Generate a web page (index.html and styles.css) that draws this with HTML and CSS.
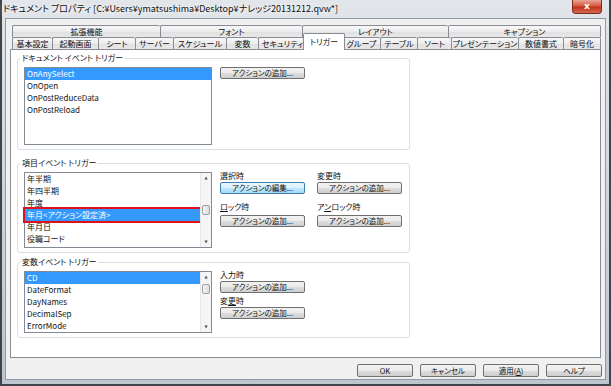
FILE: index.html
```html
<!DOCTYPE html>
<html lang="ja">
<head>
  <meta charset="UTF-8">
  <title>ドキュメント プロパティ</title>
  <link rel="stylesheet" href="styles.css">
</head>
<body>
  <div class="window">
    <div class="titlebar">
      <span class="title">ドキュメント プロパティ [C:¥Users¥ymatsushima¥Desktop¥ナレッジ20131212.qvw*]</span>
      <span class="close">x</span>
    </div>

    <div class="client">
      <div class="tabs">
        <div class="tab-row back">
          <div class="tab">拡張機能</div>
          <div class="tab">フォント</div>
          <div class="tab">レイアウト</div>
          <div class="tab">キャプション</div>
        </div>
        <div class="tab-row front">
          <div class="tab">基本設定</div>
          <div class="tab">起動画面</div>
          <div class="tab">シート</div>
          <div class="tab">サーバー</div>
          <div class="tab">スケジュール</div>
          <div class="tab">変数</div>
          <div class="tab">セキュリティ</div>
          <div class="tab active">トリガー</div>
          <div class="tab">グループ</div>
          <div class="tab">テーブル</div>
          <div class="tab">ソート</div>
          <div class="tab">プレゼンテーション</div>
          <div class="tab">数値書式</div>
          <div class="tab">暗号化</div>
        </div>
      </div>

      <div class="panel">
        <!-- ドキュメント イベント -->
        <fieldset class="group group-doc">
          <legend>ドキュメント イベント トリガー</legend>
          <div class="group-body">
            <div class="listbox list-doc">
              <div class="items">
                <div class="item selected">OnAnySelect</div>
                <div class="item">OnOpen</div>
                <div class="item">OnPostReduceData</div>
                <div class="item">OnPostReload</div>
              </div>
            </div>
            <div class="actions single">
              <button class="btn">アクションの追加...</button>
            </div>
          </div>
        </fieldset>

        <!-- 項目イベント -->
        <fieldset class="group group-field">
          <legend>項目イベント トリガー</legend>
          <div class="group-body">
            <div class="listbox list-field">
              <div class="items">
                <div class="item">年半期</div>
                <div class="item">年四半期</div>
                <div class="item">年度</div>
                <div class="item selected marked">年月&lt;アクション設定済&gt;</div>
                <div class="item">年月日</div>
                <div class="item">役職コード</div>
                <div class="item cut">所属コード</div>
              </div>
              <div class="scrollbar">
                <div class="arrow">▲</div>
                <div class="track"><div class="thumb thumb-mid"></div></div>
                <div class="arrow">▼</div>
              </div>
            </div>
            <div class="actions pair">
              <div class="field">
                <label>選択時</label>
                <button class="btn hot">アクションの編集...</button>
              </div>
              <div class="field">
                <label>変更時</label>
                <button class="btn">アクションの追加...</button>
              </div>
              <div class="field">
                <label><u>ロ</u>ック時</label>
                <button class="btn">アクションの追加...</button>
              </div>
              <div class="field">
                <label>ア<u>ン</u>ロック時</label>
                <button class="btn">アクションの追加...</button>
              </div>
            </div>
          </div>
        </fieldset>

        <!-- 変数イベント -->
        <fieldset class="group group-var">
          <legend>変数イベント トリガー</legend>
          <div class="group-body">
            <div class="listbox list-var">
              <div class="items">
                <div class="item selected">CD</div>
                <div class="item">DateFormat</div>
                <div class="item">DayNames</div>
                <div class="item">DecimalSep</div>
                <div class="item">ErrorMode</div>
              </div>
              <div class="scrollbar">
                <div class="arrow">▲</div>
                <div class="track"><div class="thumb thumb-top"></div></div>
                <div class="arrow">▼</div>
              </div>
            </div>
            <div class="actions column">
              <div class="field">
                <label>入力時</label>
                <button class="btn">アクションの追加...</button>
              </div>
              <div class="field">
                <label>変<u>更</u>時</label>
                <button class="btn">アクションの追加...</button>
              </div>
            </div>
          </div>
        </fieldset>
      </div>

      <div class="footer">
        <button class="btn">OK</button>
        <button class="btn">キャンセル</button>
        <button class="btn">適用(<u>A</u>)</button>
        <button class="btn">ヘルプ</button>
      </div>
    </div>
  </div>
</body>
</html>
```

FILE: styles.css
```css
body {
  margin: 0;
  background: #c9d1da;
  font-family: "Noto Sans CJK JP", "Liberation Sans", sans-serif;
  font-size: 8px;
  font-feature-settings: "palt";
  color: #111;
}

.window {
  width: 611px;
  height: 386px;
  box-sizing: border-box;
  display: flex;
  flex-direction: column;
  padding: 0 3px 4px 3px;
  border: 2px solid #40454b;
  border-top: none;
  background: linear-gradient(180deg, #e2e5e9 0%, #d6dce3 30%, #bdc5ce 100%);
}

/* title bar */
.titlebar {
  height: 18px;
  flex: none;
  display: flex;
  align-items: flex-start;
}
.title {
  margin-left: -2px;
  font-size: 9px;
  line-height: 17px;
  white-space: nowrap;
  color: #111;
  text-shadow: 0 0 4px #fff, 0 0 8px #fff;
}
.close {
  margin-left: auto;
  margin-right: 4px;
  width: 30px;
  height: 14px;
  box-sizing: border-box;
  border: 1px solid #7b2b20;
  border-top: none;
  border-radius: 0 0 4px 4px;
  background: linear-gradient(#e9a797, #d35a41 45%, #c1321b 55%, #d56a50);
  color: #fff;
  font: bold 9px/12px "DejaVu Sans", sans-serif;
  text-align: center;
}

/* client area */
.client {
  flex: 1;
  display: flex;
  flex-direction: column;
  background: #f0f0f0;
  border: 1px solid #8e9aa6;
  padding: 6px 4px 0;
}

/* tabs */
.tabs {
  margin-left: 2px;
}
.tab-row {
  display: flex;
  height: 12px;
}
.tab {
  flex: none;
  box-sizing: border-box;
  height: 12px;
  border: 1px solid #898c95;
  border-right: none;
  border-bottom: none;
  border-radius: 2px 2px 0 0;
  background: linear-gradient(#f8f8f8, #ececec 50%, #e0e0e0 51%, #e8e8e8);
  text-align: center;
  line-height: 11px;
  white-space: nowrap;
}
.tab:last-child {
  border-right: 1px solid #898c95;
}
.tab.active {
  position: relative;
  z-index: 1;
  height: 17px;
  margin: -4px -3px -1px;
  background: #fff;
  border-right: 1px solid #898c95;
  line-height: 15px;
}

.back .tab:nth-child(1) { width: 148px; }
.back .tab:nth-child(2) { width: 142px; }
.back .tab:nth-child(3) { width: 146px; }
.back .tab:nth-child(4) { width: 153px; }

.front .tab:nth-child(1) { width: 40px; }
.front .tab:nth-child(2) { width: 46px; }
.front .tab:nth-child(3) { width: 37px; }
.front .tab:nth-child(4) { width: 38px; }
.front .tab:nth-child(5) { width: 53px; }
.front .tab:nth-child(6) { width: 32px; }
.front .tab:nth-child(7) { width: 48px; }
.front .tab:nth-child(8) { width: 42px; }
.front .tab:nth-child(9) { width: 38px; }
.front .tab:nth-child(10) { width: 37px; }
.front .tab:nth-child(11) { width: 34px; }
.front .tab:nth-child(12) { width: 67px; }
.front .tab:nth-child(13) { width: 45px; }
.front .tab:nth-child(14) { width: 38px; }

/* tab page */
.panel {
  height: 309px;
  box-sizing: border-box;
  border: 1px solid #898c95;
  background: #fff;
  padding: 0 6px;
}

.group {
  width: 393px;
  min-width: 0;
  box-sizing: border-box;
  margin: 3px 0 0;
  padding: 4px 6px;
  border: 1px solid #d5dfe5;
  border-radius: 3px;
}
.group-field { margin-top: 8px; }
.group-var { margin-top: 4px; }

.group legend {
  margin-left: -4px;
  padding: 0 2px;
  font-size: 8px;
  line-height: 10px;
}

.group-body {
  display: flex;
  align-items: flex-start;
  gap: 8px;
}

/* list boxes */
.listbox {
  width: 188px;
  box-sizing: border-box;
  display: flex;
  border: 1px solid #848a93;
  background: #fff;
}
.list-doc { height: 78px; }
.list-field { height: 76px; }
.list-var { height: 62px; }

.items {
  flex: 1;
  min-width: 0;
}
.item {
  height: 12px;
  line-height: 12px;
  padding-left: 2px;
  white-space: nowrap;
}
.item.selected {
  background: #3399ff;
  color: #fff;
}
.item.marked {
  outline: 2px solid #e2101b;
}
.item.cut {
  height: 2px;
  overflow: hidden;
}

.scrollbar {
  width: 10px;
  display: flex;
  flex-direction: column;
  background: #f5f5f5;
  border-left: 1px solid #e8e8e8;
}
.arrow {
  height: 10px;
  font: 4px/10px "DejaVu Sans", sans-serif;
  text-align: center;
  color: #4d4d4d;
}
.track {
  flex: 1;
}
.thumb {
  height: 10px;
  box-sizing: border-box;
  margin: 0 1px;
  border: 1px solid #a0a0a0;
  border-radius: 2px;
  background: linear-gradient(90deg, #f4f4f4, #dcdcdc);
}
.thumb-mid { margin-top: 22px; }
.thumb-top { margin-top: 2px; }

/* action buttons */
.actions.pair {
  display: grid;
  grid-template-columns: 85px 85px;
  column-gap: 12px;
  row-gap: 8px;
  margin-top: -1px;
}
.actions.column {
  display: grid;
  row-gap: 3px;
  margin-top: -1px;
}
.field label {
  display: block;
  height: 10px;
  line-height: 10px;
}
.field .btn {
  margin-top: 1px;
}
.pair .field:nth-child(n+3) .btn {
  margin-top: 3px;
}

.btn {
  display: block;
  box-sizing: border-box;
  width: 85px;
  height: 12px;
  padding: 0;
  border: 1px solid #707070;
  border-radius: 2px;
  background: linear-gradient(#f2f2f2, #ebebeb 50%, #dddddd 51%, #cfcfcf);
  font: 7.5px/10px "Noto Sans CJK JP", sans-serif;
  font-feature-settings: "palt";
  color: #111;
}
.btn.hot {
  border-color: #3c7fb1;
  background: linear-gradient(#eaf6fd, #d9f0fc 50%, #bee6fd 51%, #a7d9f5);
}

/* dialog buttons */
.footer {
  flex: 1;
  display: flex;
  justify-content: flex-end;
  align-items: flex-start;
  gap: 7px;
  padding-top: 6px;
  margin-right: -1px;
}
.footer .btn {
  width: 56px;
  height: 13px;
  line-height: 11px;
}
```
